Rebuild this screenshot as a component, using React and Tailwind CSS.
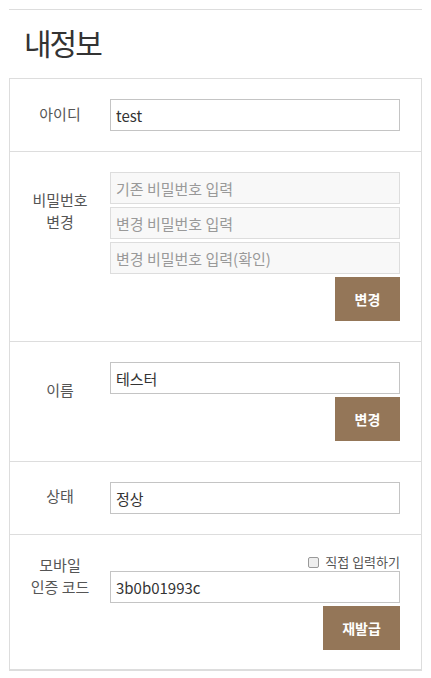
import React from 'react';

const font = { fontFamily: '"Noto Sans CJK KR", "Noto Sans", sans-serif' };

const Field = ({ value, placeholder, muted }) => (
    <input
        readOnly
        defaultValue={value}
        placeholder={placeholder}
        className={
            'block w-full h-[32px] px-[5px] text-[15px] text-[#333] placeholder:text-[#999] outline-none ' +
            (muted ? 'bg-[#f8f8f8] border border-[#ddd]' : 'bg-white border border-[#c4c4c4]')
        }
    />
);

const BrownButton = ({ children, w }) => (
    <div className="flex justify-end mt-[3px]">
        <button className={'h-[44px] bg-[#947658] text-white text-[14px] font-bold ' + w}>
            {children}
        </button>
    </div>
);

const Row = ({ label, labelPad, children, last }) => (
    <div className={'flex ' + (last ? 'border-b-2 border-[#ddd]' : 'border-b border-[#ddd]')}>
        <div className={'w-[100px] shrink-0 text-center text-[15px] leading-[22px] text-[#555] ' + labelPad}>
            {label}
        </div>
        <div className={'flex-1 pr-[21px] pt-[20px] ' + (last ? 'pb-[19px]' : 'pb-[20px]')}>{children}</div>
    </div>
);

export default function App() {
    return (
        <div className="bg-white min-h-[678px] pt-[9px]" style={font}>
            <div className="mx-[9px] border-t border-[#ddd]">
                <h1 className="pl-[15px] pt-[12px] pb-[15px] text-[30px] leading-[41px] text-[#333] tracking-[-2px]">
                    내정보
                </h1>
                <div className="border-t border-x border-[#ddd]">
                    <Row label="아이디" labelPad="pt-[24px]">
                        <Field value="test" />
                    </Row>
                    <Row label={<>비밀번호<br />변경</>} labelPad="pt-[37px]">
                        <div className="flex flex-col gap-[3px]">
                            <Field muted placeholder="기존 비밀번호 입력" />
                            <Field muted placeholder="변경 비밀번호 입력" />
                            <Field muted placeholder="변경 비밀번호 입력(확인)" />
                        </div>
                        <BrownButton w="w-[65px]">변경</BrownButton>
                    </Row>
                    <Row label="이름" labelPad="pt-[37px]">
                        <Field value="테스터" />
                        <BrownButton w="w-[65px]">변경</BrownButton>
                    </Row>
                    <Row label="상태" labelPad="pt-[23px]">
                        <Field value="정상" />
                    </Row>
                    <Row label={<>모바일<br />인증 코드</>} labelPad="pt-[19px]" last>
                        <label className="flex items-center justify-end gap-[6px] h-[14px] mb-[2px] text-[13px] text-[#555]">
                            <span className="w-[11px] h-[11px] rounded-[2px] border border-[#999] bg-[#eee]" />
                            직접 입력하기
                        </label>
                        <Field value="3b0b01993c" />
                        <BrownButton w="w-[77px]">재발급</BrownButton>
                    </Row>
                </div>
            </div>
        </div>
    );
}
